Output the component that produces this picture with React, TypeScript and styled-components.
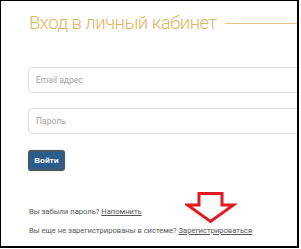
import React from "react";
import styled, { createGlobalStyle } from "styled-components";

const Global = createGlobalStyle`
  html, body { margin: 0; padding: 0; background: #fff; }
  body { font-family: Roboto, "Liberation Sans", sans-serif; }
`;

const Frame = styled.div`
  position: relative;
  box-sizing: border-box;
  width: 299px;
  height: 248px;
  border: 1px solid #000;
  border-right-width: 2px;
  border-bottom-width: 2px;
  overflow: hidden;
  padding: 9px 0 0 27px;
`;

const TitleRow = styled.div`
  display: flex;
  align-items: center;
  gap: 8px;
  height: 26px;
`;

const Title = styled.h1`
  margin: 0;
  font-family: Roboto, sans-serif;
  font-weight: 300;
  font-size: 18.6px;
  letter-spacing: -0.55px;
  line-height: 26px;
  color: #e2b565;
  white-space: nowrap;
  padding-left: 1px;
`;

const Rule = styled.div`
  flex: 1;
  height: 1px;
  background: #e6c486;
  margin-top: 1px;
`;

const Form = styled.div`
  display: flex;
  flex-direction: column;
  gap: 15px;
  margin-top: 31px;
  width: 300px;
`;

const Field = styled.input`
  box-sizing: border-box;
  height: 26px;
  width: 100%;
  border: 1px solid #dcdcdc;
  border-radius: 4px;
  padding: 0 7px;
  font-family: Roboto, sans-serif;
  font-size: 8.5px;
  color: #444;
  outline: none;
  &::placeholder { color: #a0a0a0; }
`;

const Button = styled.button`
  box-sizing: border-box;
  margin-top: 16px;
  width: 37px;
  height: 21px;
  padding: 0;
  border: 2px solid #4a5560;
  border-radius: 3px;
  background: #2b5c8e;
  color: #fff;
  font-family: "Liberation Sans", Arial, sans-serif;
  font-weight: bold;
  font-size: 8px;
  display: block;
  box-shadow: 0 0 3px rgba(0,0,0,0.15);
`;

const Notes = styled.div`
  margin-top: 35px;
  display: flex;
  flex-direction: column;
  gap: 8px;
  font-family: Roboto, sans-serif;
  font-size: 7.6px;
  line-height: 11px;
  color: #555;
  padding-left: 1px;
`;

const Note = styled.div`
  white-space: nowrap;
`;

const Link = styled.a`
  color: #555;
  text-decoration: underline;
`;

const ArrowSvg = styled.svg`
  position: absolute;
  left: 184px;
  top: 190px;
`;

export default function App() {
  return (
    <>
      <Global />
      <Frame>
        <TitleRow>
          <Title>Вход в личный кабинет</Title>
          <Rule />
        </TitleRow>
        <Form>
          <Field placeholder="Email адрес" />
          <Field type="password" placeholder="Пароль" />
        </Form>
        <Button>Войти</Button>
        <Notes>
          <Note>
            Вы забыли пароль? <Link>Напомнить</Link>
          </Note>
          <Note>
            Вы еще не зарегистрированы в системе? <Link>Зарегистрироваться</Link>
          </Note>
        </Notes>
        <ArrowSvg width="52" height="34" viewBox="0 0 52 34">
          <path
            d="M14 2.5 H37 V14 H48.5 L25.5 30.5 L2.5 14 H14 Z"
            fill="none"
            stroke="#e3191f"
            strokeWidth="3"
            strokeLinejoin="miter"
          />
        </ArrowSvg>
      </Frame>
    </>
  );
}
